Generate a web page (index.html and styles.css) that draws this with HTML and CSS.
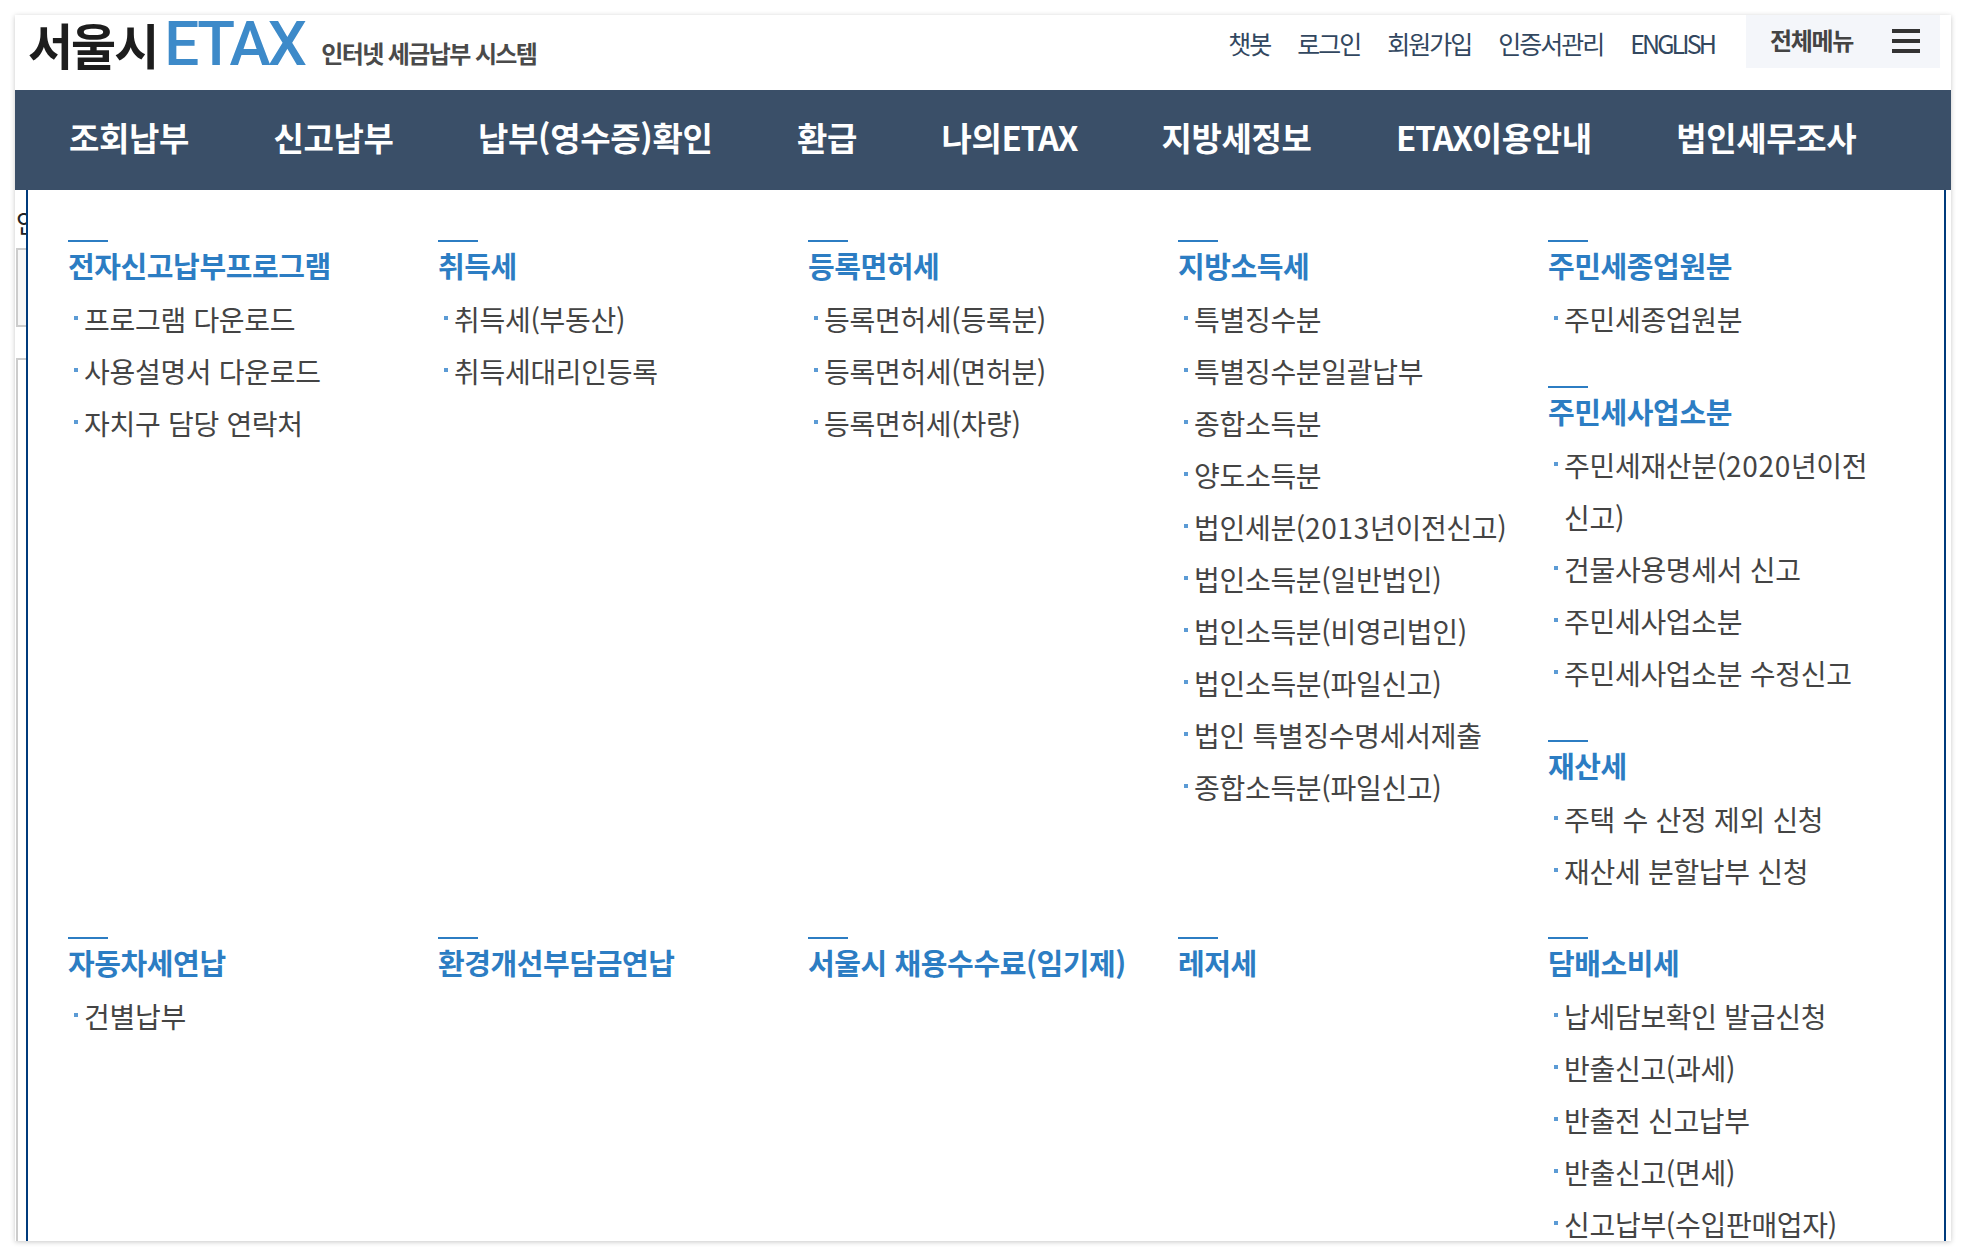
FILE: index.html
```html
<!DOCTYPE html>
<html lang="ko">
<head>
<meta charset="utf-8">
<title>서울시 ETAX</title>
<link rel="stylesheet" href="styles.css">
</head>
<body>
<div class="window">
  <header class="top">
    <div class="logo"><span class="logo-city">서울시</span><span class="logo-etax">ETAX</span><span class="logo-sub">인터넷 세금납부 시스템</span></div>
    <nav class="util">
      <a>챗봇</a><a>로그인</a><a>회원가입</a><a>인증서관리</a><a class="eng">ENGLISH</a>
    </nav>
    <div class="allmenu"><span>전체메뉴</span><svg class="burger" width="28" height="24" viewBox="0 0 28 24"><rect width="28" height="4" y="0"/><rect width="28" height="4" y="10"/><rect width="28" height="4" y="20"/></svg></div>
  </header>
  <nav class="gnb">
    <a>조회납부</a><a>신고납부</a><a>납부(영수증)확인</a><a>환급</a><a>나의<span class="latin">ETAX</span></a><a>지방세정보</a><a><span class="latin">ETAX</span>이용안내</a><a>법인세무조사</a>
  </nav>
  <div class="body">
    <div class="behind">
      <span class="behind-text">안</span>
      <div class="behind-box"></div>
      <div class="behind-box second"></div>
    </div>
    <main class="panel">
      <div class="col">
        <section class="grp"><h3>전자신고납부프로그램</h3><ul><li>프로그램 다운로드</li><li>사용설명서 다운로드</li><li>자치구 담당 연락처</li></ul></section>
      </div>
      <div class="col">
        <section class="grp"><h3>취득세</h3><ul><li>취득세(부동산)</li><li>취득세대리인등록</li></ul></section>
      </div>
      <div class="col">
        <section class="grp"><h3>등록면허세</h3><ul><li>등록면허세(등록분)</li><li>등록면허세(면허분)</li><li>등록면허세(차량)</li></ul></section>
      </div>
      <div class="col">
        <section class="grp"><h3>지방소득세</h3><ul><li>특별징수분</li><li>특별징수분일괄납부</li><li>종합소득분</li><li>양도소득분</li><li>법인세분(<span class="num">2013</span>년이전신고)</li><li>법인소득분(일반법인)</li><li>법인소득분(비영리법인)</li><li>법인소득분(파일신고)</li><li>법인 특별징수명세서제출</li><li>종합소득분(파일신고)</li></ul></section>
      </div>
      <div class="col">
        <section class="grp"><h3>주민세종업원분</h3><ul><li>주민세종업원분</li></ul></section>
        <section class="grp"><h3>주민세사업소분</h3><ul><li>주민세재산분(<span class="num">2020</span>년이전<br>신고)</li><li>건물사용명세서 신고</li><li>주민세사업소분</li><li>주민세사업소분 수정신고</li></ul></section>
        <section class="grp"><h3>재산세</h3><ul><li>주택 수 산정 제외 신청</li><li>재산세 분할납부 신청</li></ul></section>
      </div>
      <div class="col">
        <section class="grp"><h3>자동차세연납</h3><ul><li>건별납부</li></ul></section>
      </div>
      <div class="col">
        <section class="grp"><h3>환경개선부담금연납</h3></section>
      </div>
      <div class="col">
        <section class="grp"><h3>서울시 채용수수료(임기제)</h3></section>
      </div>
      <div class="col">
        <section class="grp"><h3>레저세</h3></section>
      </div>
      <div class="col">
        <section class="grp"><h3>담배소비세</h3><ul><li>납세담보확인 발급신청</li><li>반출신고(과세)</li><li>반출전 신고납부</li><li>반출신고(면세)</li><li>신고납부(수입판매업자)</li></ul></section>
      </div>
    </main>
  </div>
</div>
</body>
</html>
```
FILE: styles.css
```css
* { box-sizing: border-box; }
html, body { margin: 0; height: 100%; background: #fff; overflow: hidden; }
body {
  padding: 15px;
  font-family: "Noto Sans CJK KR", "Noto Sans", sans-serif;
}
.window {
  width: 1936px;
  height: 1226px;
  display: flex;
  flex-direction: column;
  background: #fff;
  box-shadow: 0 1px 5px rgba(0,0,0,.22);
}
.top {
  height: 75px;
  flex: none;
  display: flex;
  align-items: flex-start;
  padding-right: 11px;
}
.logo {
  display: flex;
  align-items: baseline;
  margin-left: 13px;
  height: 75px;
  line-height: 58px;
  white-space: nowrap;
  flex: 1;
}
.logo-city { font-size: 49px; font-weight: 700; color: #1d1d1d; letter-spacing: -2px; }
.logo-etax { font-family: Roboto, "Liberation Sans", sans-serif; font-size: 62px; font-weight: 500; color: #3d8ac9; margin-left: 7px; letter-spacing: -2.7px; }
.logo-sub { align-self: flex-start; margin-top: 26px; line-height: 24px; font-size: 24px; font-weight: 700; color: #4a4a4a; letter-spacing: -1.6px; margin-left: 17px; }
.util {
  display: flex;
  gap: 27px;
  height: 53px;
  align-items: center;
  margin-right: 32px;
  margin-top: 1px;
}
.util a { font-size: 25px; font-weight: 400; color: #32475f; letter-spacing: -2px; }
.util .eng { letter-spacing: -2.9px; }
.allmenu {
  width: 194px;
  height: 53px;
  background: #f4f6fa;
  display: flex;
  align-items: center;
  justify-content: space-between;
  padding: 0 20px 0 24px;
}
.allmenu span { font-size: 24px; font-weight: 700; color: #444; letter-spacing: -1.3px; margin-top: -4px; }
.burger { fill: #333; margin-top: -2px; }
.gnb {
  height: 100px;
  flex: none;
  background: #3a4f68;
  display: flex;
  align-items: center;
  gap: 84.5px;
  padding: 0 0 7px 54px;
}
.gnb a { font-size: 33px; font-weight: 700; color: #fff; letter-spacing: -0.35px; white-space: nowrap; }
.gnb .latin { letter-spacing: -1.4px; }
.body {
  flex: 1;
  min-height: 0;
  display: flex;
  position: relative;
}
.behind {
  width: 11px;
  flex: none;
  overflow: hidden;
  position: relative;
}
.behind-text {
  position: absolute;
  left: 1px;
  top: 12px;
  font-size: 26px;
  line-height: 40px;
  color: #222;
}
.behind-box { position: absolute; left: 1px; top: 58px; width: 30px; height: 79px; background: #f7f7f7; border: 2px solid #ccc; }
.behind-box.second { top: 168px; height: 900px; background: #fff; }
.panel {
  flex: 1;
  min-width: 0;
  display: grid;
  grid-template-columns: repeat(5, 370px);
  grid-template-rows: 697px 1fr;
  align-content: start;
  padding: 50px 0 0 40px;
  border-left: 2px solid #003b7c;
  border-right: 2px solid #003b7c;
  margin-right: 5px;
  overflow: hidden;
  background: #fff;
}
.grp { padding-bottom: 41px; }
.grp h3 {
  margin: 0;
  font-size: 29px;
  line-height: 50px;
  height: 53px;
  font-weight: 700;
  color: #2c7dc3;
  letter-spacing: -0.4px;
  white-space: nowrap;
  position: relative;
}
.grp h3::before {
  content: "";
  position: absolute;
  left: 0;
  top: 0;
  width: 40px;
  height: 2px;
  background: #2c7dc3;
}
.grp ul { list-style: none; margin: 0; padding: 0; }
.grp li {
  font-size: 28px;
  line-height: 52px;
  color: #444;
  letter-spacing: -0.3px;
  padding-left: 16px;
  position: relative;
  width: 330px;
  word-break: keep-all;
}
.grp li .num { letter-spacing: 0.7px; }
.grp li::before {
  content: "";
  position: absolute;
  left: 6px;
  top: 23px;
  width: 4px;
  height: 4px;
  background: #5b9bd5;
}
```
